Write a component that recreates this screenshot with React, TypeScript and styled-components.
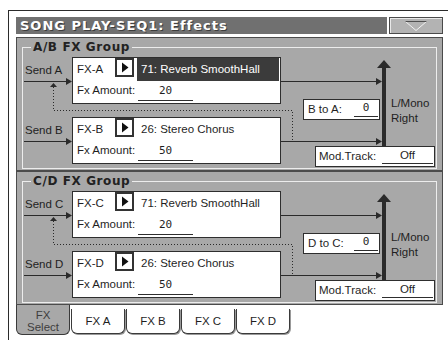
import React from 'react'
import styled, { createGlobalStyle } from 'styled-components'

const GlobalStyle = createGlobalStyle`
  html, body {
    margin: 0;
    padding: 0;
    background: #ffffff;
  }
  body {
    font-family: "Liberation Sans", Arial, sans-serif;
    font-size: 11.5px;
    color: #1f1f1f;
  }
`

const Window = styled.div`
  box-sizing: border-box;
  width: 440px;
  height: 330px;
  margin: 10px 0 0 8px;
  padding: 6px 5px 0 7px;
  border-top: 1px solid #2b2b2b;
  border-left: 1px solid #2b2b2b;
`

const TitleRow = styled.div`
  display: flex;
  gap: 2px;
  height: 17px;
  margin-bottom: 3px;
`

const TitleBar = styled.div`
  flex: 1;
  background: #707070;
  color: #ffffff;
  font-family: "DejaVu Sans", sans-serif;
  font-weight: bold;
  font-size: 13px;
  letter-spacing: 1px;
  line-height: 17px;
  padding-left: 4px;
  text-shadow: 1px 1px 0 #3c3c3c;
`

const MenuButton = styled.div`
  box-sizing: border-box;
  width: 54px;
  height: 17px;
  background: #b3b3b3;
  border: 1px solid #4a4a4a;
  box-shadow: inset 1px 1px 0 #e9e9e9;
  display: flex;
  align-items: center;
  justify-content: center;
`

const Section = styled.section`
  position: relative;
  box-sizing: border-box;
  height: 134px;
  border: 1px solid #4b4b4b;
  background: #a8a8a8;
  padding: 2px 5px 0;
`

const Group = styled.fieldset`
  box-sizing: border-box;
  height: 129px;
  margin: 0;
  padding: 0;
  min-width: 0;
  border: 1px solid #ededed;
`

const Legend = styled.legend`
  margin-left: 8px;
  padding: 0 2px;
  font-family: "DejaVu Sans", sans-serif;
  font-weight: bold;
  font-size: 12px;
  line-height: 14px;
  letter-spacing: 0.6px;
  color: #222;
`

const GroupBody = styled.div`
  display: flex;
  align-items: flex-start;
  padding-top: 3px;
`

const FxColumn = styled.div`
  display: flex;
  flex-direction: column;
  gap: 13px;
`

const SendRow = styled.div`
  display: flex;
`

const SendLabel = styled.div`
  width: 49px;
  box-sizing: border-box;
  padding: 6px 0 0 2px;
  line-height: 14px;
`

const FxBox = styled.div`
  box-sizing: border-box;
  width: 209px;
  height: 47px;
  border: 1px solid #2e2e2e;
  background: #ffffff;
  display: flex;
  flex-direction: column;
`

const FxHead = styled.div`
  display: flex;
  height: 23px;
  padding-left: 4px;
`

const FxName = styled.div`
  width: 38px;
  line-height: 22px;
`

const PlayButton = styled.div`
  box-sizing: border-box;
  width: 19px;
  height: 19px;
  border: 2px solid #333;
  margin-right: 3px;
  display: flex;
  align-items: center;
  justify-content: center;
`

const Preset = styled.div<{ $selected?: boolean }>`
  flex: 1;
  margin-right: 1px;
  padding-left: 4px;
  line-height: 22px;
  background: ${p => (p.$selected ? '#3b3b3b' : 'transparent')};
  color: ${p => (p.$selected ? '#ffffff' : '#1f1f1f')};
`

const AmountRow = styled.div`
  display: flex;
  height: 22px;
  padding-left: 4px;
`

const FieldLabel = styled.div<{ $width: number }>`
  width: ${p => p.$width}px;
  line-height: 19px;
`

const Value = styled.div<{ $width: number; $height: number; $mono?: boolean }>`
  box-sizing: border-box;
  width: ${p => p.$width}px;
  height: ${p => p.$height}px;
  border-bottom: 1px solid #2e2e2e;
  text-align: center;
  line-height: ${p => p.$height - 1}px;
  font-family: ${p => (p.$mono ? '"DejaVu Sans Mono", monospace' : '"Liberation Sans", Arial, sans-serif')};
  font-size: ${p => (p.$mono ? '11px' : '11.5px')};
`

const Mixer = styled.div`
  display: flex;
  flex-direction: column;
  margin-left: 22px;
`

const ReturnRow = styled.div`
  display: flex;
  height: 21px;
  margin-top: 42px;
`

const SmallBox = styled.div<{ $width: number }>`
  box-sizing: border-box;
  width: ${p => p.$width}px;
  height: 21px;
  border: 1px solid #2e2e2e;
  background: #ffffff;
  display: flex;
  justify-content: space-between;
  padding-left: 4px;
  padding-right: 1px;
`

const OutLabel = styled.div`
  margin: -3px 0 0 11px;
  line-height: 15px;
`

const ModBox = styled(SmallBox)`
  margin: 26px 0 0 12px;
  padding-left: 3px;
`

const Wires = styled.svg`
  position: absolute;
  left: 0;
  top: 0;
  pointer-events: none;
`

const TabBar = styled.div`
  display: flex;
  align-items: flex-start;
  gap: 1px;
`

const Tab = styled.div<{ $active?: boolean }>`
  box-sizing: border-box;
  width: 54px;
  height: ${p => (p.$active ? '30px' : '25px')};
  margin-top: ${p => (p.$active ? '0' : '4px')};
  border: 1px solid #3a3a3a;
  border-top: none;
  border-radius: 0 0 6px 6px;
  background: ${p => (p.$active ? '#a8a8a8' : '#ffffff')};
  color: ${p => (p.$active ? '#3e3e3e' : '#1f1f1f')};
  box-shadow: ${p => (p.$active ? 'none' : '1px 1px 0 #9a9a9a')};
  display: flex;
  align-items: center;
  justify-content: center;
  text-align: center;
  line-height: 12px;
  padding-top: ${p => (p.$active ? '3px' : '0')};
`

type Send = { send: string; fx: string; preset: string; amount: string; selected?: boolean }
type FxGroup = { label: string; ret: string; sends: Send[] }

const groups: FxGroup[] = [
  {
    label: 'A/B FX Group',
    ret: 'B to A:',
    sends: [
      { send: 'Send A', fx: 'FX-A', preset: '71: Reverb SmoothHall', amount: '20', selected: true },
      { send: 'Send B', fx: 'FX-B', preset: '26: Stereo Chorus', amount: '50' },
    ],
  },
  {
    label: 'C/D FX Group',
    ret: 'D to C:',
    sends: [
      { send: 'Send C', fx: 'FX-C', preset: '71: Reverb SmoothHall', amount: '20' },
      { send: 'Send D', fx: 'FX-D', preset: '26: Stereo Chorus', amount: '50' },
    ],
  },
]

const PlayIcon = () => (
  <svg width="15" height="15" viewBox="0 0 15 15">
    <polygon points="5,2.5 11.5,7.5 5,12.5" fill="#111" />
  </svg>
)

const MenuIcon = () => (
  <svg width="24" height="12" viewBox="0 0 24 12">
    <polyline points="1.5,1.5 12,10.5 22.5,1.5" fill="none" stroke="#f2f2f2" strokeWidth="1" />
    <line x1="1.5" y1="1.5" x2="22.5" y2="1.5" stroke="#505050" strokeWidth="1" />
  </svg>
)

// signal routing drawn over the group: sends in, outputs to the main bus
const Routing = () => (
  <Wires width="425" height="132">
    <g fill="#2a2a2a" stroke="none">
      <polygon points="49,40 55,43.5 49,47" />
      <polygon points="49,100 55,103.5 49,107" />
      <polygon points="33,49 36.5,45 40,49" />
      <polygon points="359,40 365,43.5 359,47" />
      <polygon points="359,100 365,103.5 359,107" />
      <polygon points="360,30 367,22 374,30" />
      <rect x="365" y="29" width="4" height="79" />
    </g>
    <g stroke="#2a2a2a" strokeWidth="1" fill="none">
      <line x1="7" y1="43.5" x2="50" y2="43.5" />
      <line x1="7" y1="103.5" x2="50" y2="103.5" />
      <line x1="264" y1="43.5" x2="360" y2="43.5" />
      <line x1="264" y1="103.5" x2="360" y2="103.5" />
      <path d="M36.5 49 V72.5 H275.5 V103" strokeDasharray="1 2" />
    </g>
  </Wires>
)

const FxSend = ({ s }: { s: Send }) => (
  <SendRow>
    <SendLabel>{s.send}</SendLabel>
    <FxBox>
      <FxHead>
        <FxName>{s.fx}</FxName>
        <PlayButton>
          <PlayIcon />
        </PlayButton>
        <Preset $selected={s.selected}>{s.preset}</Preset>
      </FxHead>
      <AmountRow>
        <FieldLabel $width={61}>Fx Amount:</FieldLabel>
        <Value $width={55} $height={20} $mono>
          {s.amount}
        </Value>
      </AmountRow>
    </FxBox>
  </SendRow>
)

const GroupSection = ({ g }: { g: FxGroup }) => (
  <Section>
    <Routing />
    <Group>
      <Legend>{g.label}</Legend>
      <GroupBody>
        <FxColumn>
          {g.sends.map(s => (
            <FxSend key={s.fx} s={s} />
          ))}
        </FxColumn>
        <Mixer>
          <ReturnRow>
            <SmallBox $width={77}>
              <FieldLabel $width={46}>{g.ret}</FieldLabel>
              <Value $width={24} $height={17} $mono>
                0
              </Value>
            </SmallBox>
            <OutLabel>
              L/Mono
              <br />
              Right
            </OutLabel>
          </ReturnRow>
          <ModBox $width={120}>
            <FieldLabel $width={60}>Mod.Track:</FieldLabel>
            <Value $width={51} $height={17}>
              Off
            </Value>
          </ModBox>
        </Mixer>
      </GroupBody>
    </Group>
  </Section>
)

export default function App() {
  return (
    <>
      <GlobalStyle />
      <Window>
        <TitleRow>
          <TitleBar>SONG PLAY-SEQ1: Effects</TitleBar>
          <MenuButton>
            <MenuIcon />
          </MenuButton>
        </TitleRow>
        {groups.map(g => (
          <GroupSection key={g.label} g={g} />
        ))}
        <TabBar>
          <Tab $active>
            FX
            <br />
            Select
          </Tab>
          <Tab>FX A</Tab>
          <Tab>FX B</Tab>
          <Tab>FX C</Tab>
          <Tab>FX D</Tab>
        </TabBar>
      </Window>
    </>
  )
}
